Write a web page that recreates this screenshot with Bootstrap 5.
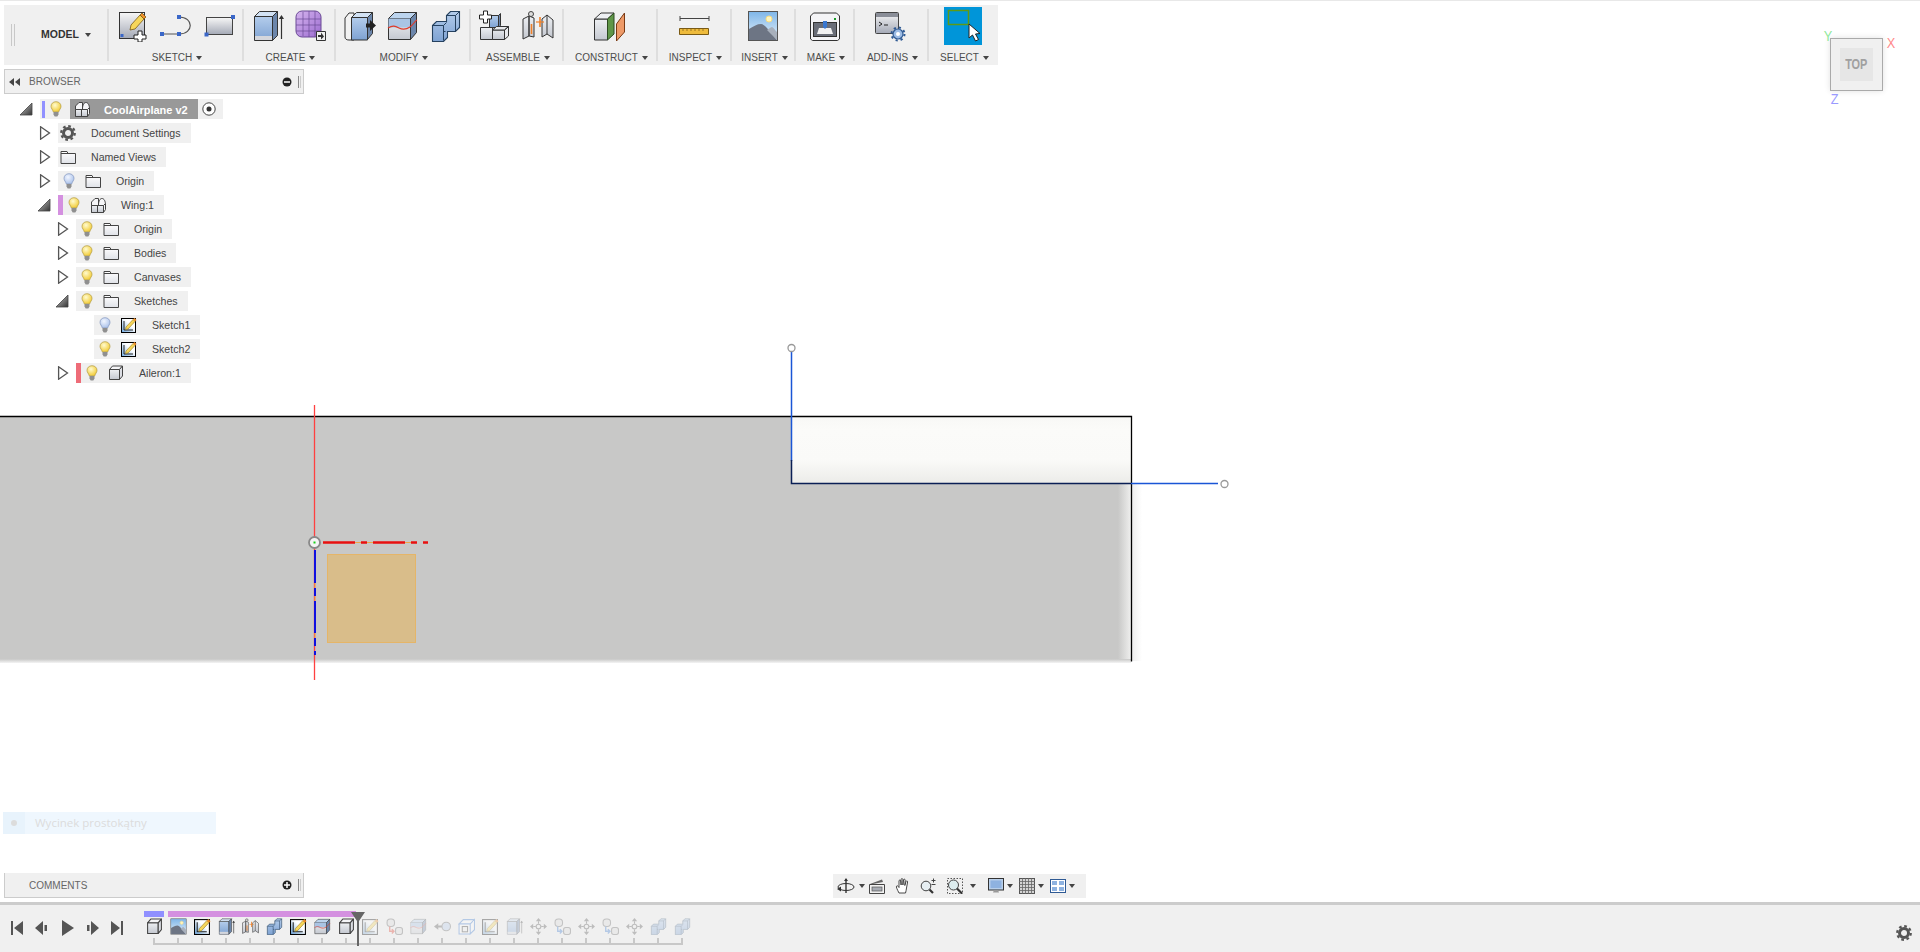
<!DOCTYPE html>
<html lang="en">
<head>
<meta charset="UTF-8">
<meta name="viewport" content="width=device-width, initial-scale=1">
<title>CoolAirplane v2</title>
<link href="https://cdn.jsdelivr.net/npm/bootstrap@5.3.1/dist/css/bootstrap.min.css" rel="stylesheet">
<script src="https://cdn.jsdelivr.net/npm/bootstrap@5.3.1/dist/js/bootstrap.bundle.min.js"></script>
<style>
body { font-family: "Liberation Sans", Arial, sans-serif; background: #fff; color: #444; overflow: hidden; }
.svg-defs { position: absolute; width: 0; height: 0; }
.cad-viewport { background: linear-gradient(#e8e8e8 1px, #fff 1px); }
.scene { position: absolute; left: 0; top: 0; }
.dock { position: absolute; left: 4px; top: 5px; bottom: 4px; width: 994px; }

/* ribbon */
.ribbon { display: grid; grid-template-columns: 104px 135px 92px 135px 93px 94px 74px 64px 59px 74px 70px; height: 60px; background: #f0f0f0; }
.rb-group { position: relative; display: flex; flex-direction: column; align-items: center; height: 60px; }
.rb-group::after { content: ""; position: absolute; right: -1px; top: 4px; bottom: 4px; width: 2px; background: #dedede; }
.rb-group:last-child::after { display: none; }
.rb-icons { display: flex; gap: 11px; height: 32px; margin-top: 5px; }
.rb-label { margin-top: 10px; font-size: 10px; line-height: 12px; color: #4c4c4c; white-space: nowrap; display: flex; align-items: center; gap: 4px; padding-left: 3px; }
.caret-dn { display: inline-block; width: 0; height: 0; border-left: 3px solid transparent; border-right: 3px solid transparent; border-top: 4px solid #444; }
.rb-model { flex-direction: row; align-items: center; }
.model-grip { width: 4px; height: 22px; margin: 0 26px 0 7px; border-left: 1px solid #c8c8c8; border-right: 1px solid #c8c8c8; }
.model-name { font-size: 10.5px; font-weight: 700; color: #333; display: flex; align-items: center; gap: 6px; }
.select-tile { width: 38px; height: 38px; background: #0095d9; margin-top: -3px; display: block; }

/* panels */
.side-panel { width: 300px; height: 25px; margin-top: 4px; background: #f0f0f0; border: 1px solid #ccc; font-size: 10px; color: #666; padding-left: 4px; padding-right: 2px; }
.side-panel .panel-title { margin-left: 6px; }
.panel-lead { width: 14px; }
.panel-pin { width: 3px; height: 12px; margin-left: 6px; border-left: 1px solid #888; border-right: 1px solid #ccc; }
.comments-panel { border-top: 0; margin-top: 0; height: 25px; }

/* tree */
.tree { margin-top: 3px; }
.tree-row { display: flex; align-items: center; height: 24px; }
.lvl-0 { padding-left: 16px; }
.lvl-1 { padding-left: 34px; }
.lvl-2 { padding-left: 52px; }
.lvl-3 { padding-left: 70px; }
.tree-arrow { width: 20px; flex: none; display: flex; }
.tree-arrow svg { display: block; }
.tree-chip { display: flex; align-items: center; height: 20px; background: #f0f0f0; font-size: 10.6px; color: #444; padding-top: 2px; padding-right: 10px; white-space: nowrap; }
.chip-bar { width: 5px; height: 20px; margin-top: -2px; }
.bar-root { background: #9090ff; width: 3px; height: 17px; margin-left: 2px; }
.bar-wing { background: #d490e0; }
.bar-aileron { background: #ee6c78; }
.chip-bulb { width: 12px; height: 16px; margin-left: 5px; margin-right: 10px; margin-top: -2px; flex: none; }
.chip-icon { width: 16px; height: 16px; margin-right: 15px; margin-top: -2px; flex: none; }
.chip-lead { margin-left: 2px; }
.root-label { display: flex; align-items: center; height: 20px; margin-top: -2px; margin-left: -2px; padding: 2px 10px 0 4px; background: #999; color: #fff; font-weight: 700; font-size: 11px; }
.root-label .chip-icon { margin-right: 14px; }
.root-radio { width: 14px; height: 14px; margin-left: 4px; margin-top: -2px; }
.root-chip { padding-right: 7px; }

/* toast */
.cmd-toast { width: 213px; height: 22px; margin-left: -1px; margin-bottom: 39px; background: #eff7fe; color: #dcdcdc; font-family: "Open Sans", sans-serif; font-size: 11.5px; }
.toast-lead { width: 22px; height: 22px; background: #e8f3fc; }
.toast-dot { width: 6px; height: 6px; border-radius: 50%; background: #dcdcdc; }
.toast-text { margin-left: 10px; }

/* nav bar */
.nav-tools { position: absolute; left: 833px; bottom: 4px; width: 253px; height: 24px; padding-left: 3px; background: #f0f0f0; display: grid; grid-template-columns: 33px 26px 25px 27px 41px 31px 31px 33px; }
.nav-cell { display: flex; align-items: center; gap: 3px; }
.nav-cell svg { width: 16px; height: 16px; flex: none; }
.nav-cell .nav-wide { width: 20px; }

/* view cube */
.view-cube { position: absolute; left: 1830px; top: 38px; width: 53px; height: 53px; background: #f0f0f0; border: 1px solid #aaa; box-shadow: 0 0 6px rgba(0,0,0,.12); }
.cube-face { width: 33px; height: 33px; background: #e6e6e6; color: #a0a0a0; font-weight: 700; font-size: 14px; }
.cube-face span { display: block; transform: scaleX(.78); }
.axis-tag { position: absolute; font-size: 15px; line-height: 15px; font-weight: 400; transform: scaleX(.85); }
.axis-y { left: 1823px; top: 28px; color: #8fe89a; }
.axis-x { left: 1886px; top: 35px; color: #ff8a8a; }
.axis-z { left: 1830px; top: 91px; color: #9a9aff; }

/* timeline */
.timeline { height: 50px; flex: none; background: #f0f0f0; border-top: 3px solid #ccc; }
.play-btns { padding-left: 4px; padding-top: 15px; }
.play-btn { width: 25px; display: flex; justify-content: center; }
.tl-strip { position: relative; margin-left: 13px; padding-top: 6px; }
.tl-bars { display: flex; gap: 4px; padding-left: 2px; height: 6px; }
.tl-bar-a { width: 20px; background: #9090ff; }
.tl-bar-b { width: 188px; background: #d490e0; }
.tl-cells { display: flex; height: 19px; }
.tl-cell { width: 24px; display: flex; justify-content: center; align-items: center; }
.tl-cell svg { width: 17px; height: 17px; }
.tl-ghost { opacity: .32; }
.tl-ruler { display: block; margin-top: 1px; }
.tl-marker { position: absolute; left: 209px; top: 7px; }
.tl-gear { margin-left: auto; margin-right: 8px; padding-top: 15px; }
</style>
</head>
<body>
<svg class="svg-defs" xmlns="http://www.w3.org/2000/svg">
  <defs>
    <linearGradient id="gWhite" x1="0" y1="0" x2="0" y2="1"><stop offset="0" stop-color="#fff"/><stop offset="1" stop-color="#b4b8c2"/></linearGradient>
    <linearGradient id="gPanel" x1="0" y1="0" x2="0" y2="1"><stop offset="0" stop-color="#f7f7f7"/><stop offset="1" stop-color="#a4a9b6"/></linearGradient>
    <linearGradient id="gBlue" x1="0" y1="0" x2="0" y2="1"><stop offset="0" stop-color="#b4cdec"/><stop offset="1" stop-color="#7ea2d2"/></linearGradient>
    <linearGradient id="gGrey" x1="0" y1="0" x2="0" y2="1"><stop offset="0" stop-color="#eef0f3"/><stop offset="1" stop-color="#c4c8d0"/></linearGradient>
    <linearGradient id="gPurple" x1="0" y1="0" x2="1" y2="1"><stop offset="0" stop-color="#d5b4ee"/><stop offset="1" stop-color="#9c6cd0"/></linearGradient>
    <linearGradient id="gSky" x1="0" y1="0" x2="0" y2="1"><stop offset="0" stop-color="#7fb6e8"/><stop offset="1" stop-color="#e6f2fb"/></linearGradient>
    <linearGradient id="gFold" x1="0" y1="0" x2="0" y2="1"><stop offset="0" stop-color="#fff"/><stop offset="1" stop-color="#e0e2e8"/></linearGradient>
    <linearGradient id="gArrow" x1="0" y1="0" x2="1" y2="1"><stop offset="0" stop-color="#ccc"/><stop offset="1" stop-color="#333"/></linearGradient>
    <linearGradient id="gSkIn" x1="0" y1="1" x2="1" y2="0"><stop offset="0" stop-color="#6aa6e0"/><stop offset=".6" stop-color="#fff"/></linearGradient>
    <radialGradient id="gBulbOn" cx=".4" cy=".35" r=".7"><stop offset="0" stop-color="#fffbd0"/><stop offset="1" stop-color="#f2c92c"/></radialGradient>
    <radialGradient id="gBulbOff" cx=".4" cy=".35" r=".7"><stop offset="0" stop-color="#f2f6ff"/><stop offset="1" stop-color="#a8c0ea"/></radialGradient>
    <linearGradient id="gFadeR" x1="0" y1="0" x2="1" y2="0"><stop offset="0" stop-color="#c8c8c7"/><stop offset="1" stop-color="#efefee"/></linearGradient>
    <linearGradient id="gFadeB" x1="0" y1="0" x2="0" y2="1"><stop offset="0" stop-color="#c8c8c7"/><stop offset="1" stop-color="#f4f4f4"/></linearGradient>
    <linearGradient id="gLight" x1="0" y1="0" x2="0" y2="1"><stop offset="0" stop-color="#f8f8f6"/><stop offset=".2" stop-color="#fbfbf9"/><stop offset=".65" stop-color="#fafaf8"/><stop offset="1" stop-color="#ecece9"/></linearGradient>
    <linearGradient id="gShade" x1="0" y1="0" x2="1" y2="0"><stop offset="0" stop-color="#eeeeee"/><stop offset="1" stop-color="#fff"/></linearGradient>

    <symbol id="i-sketch-new" viewBox="0 0 32 32">
      <rect x="2.5" y="2.5" width="25" height="26" fill="url(#gPanel)" stroke="#333"/>
      <rect x="3.5" y="24" width="3" height="3" fill="#3a67c8"/>
      <path d="M14 15 23 5l4 4-9 10-5 1z" fill="#f6d65a" stroke="#7a5a14" stroke-width=".8"/>
      <path d="M23 5l2-2 4 4-2 2z" fill="#ef8f2a" stroke="#7a5a14" stroke-width=".8"/>
      <path d="M21 21h4v4h4v4h-4v3h-4v-3h-4v-4h4z" fill="#fff" stroke="#222"/>
    </symbol>
    <symbol id="i-sk-line" viewBox="0 0 32 32">
      <path d="M3 24H19M19 7C34 7 34 24 19 24" fill="none" stroke="#555" stroke-width="1.2"/>
      <path d="M0 22h4v4H0zM17 22h4v4h-4zM17 5h4v4h-4z" fill="#3a67c8"/>
    </symbol>
    <symbol id="i-sk-rect" viewBox="0 0 32 32">
      <rect x="3.5" y="7.5" width="26" height="17" fill="url(#gPanel)" stroke="#444"/>
      <path d="M28 5h4v4h-4zM1.500 22.500h4v4h-4z" fill="#3a67c8"/>
    </symbol>
    <symbol id="i-extrude" viewBox="0 0 32 32">
      <path d="M2.500 6.500h18v24h-18z" fill="url(#gBlue)" stroke="#333"/>
      <path d="M3 26h17v4H3z" fill="#d4d6dc"/>
      <path d="M2.500 6.500l5-5h18l-5 5z" fill="#d2e2f4" stroke="#333"/>
      <path d="M20.500 6.500l5-5v24l-5 5z" fill="#6c86ab" stroke="#333"/>
      <path d="M29.500 7v22" stroke="#333" stroke-width="1.200"/>
      <path d="M26.800 9l2.700-4 2.500 4z" fill="#333"/>
    </symbol>
    <symbol id="i-form" viewBox="0 0 32 32">
      <rect x="1" y="1" width="25" height="26" rx="6" fill="url(#gPurple)" stroke="#6b4a96"/>
      <path d="M1 9h25M1 15h25M1 21h25M8 2v24M14 1v26M20 1v26" stroke="#6b4a96" stroke-width=".7" fill="none"/>
      <path d="M21.500 21.500h9v9h-9z" fill="#f0f0f0" stroke="#333"/>
      <path d="M23 25h3v-2.500l3 4-3 3V27h-3z" fill="#333"/>
    </symbol>
    <symbol id="i-presspull" viewBox="0 0 32 32">
      <path d="M1 8 5 3h5v27H5C2.500 30 1 29 1 27z" fill="#f2f2f2" stroke="#333"/>
      <path d="M7.500 7.500h16v22.500h-16z" fill="url(#gBlue)" stroke="#333"/>
      <path d="M7.500 7.500l5-5h16l-5 5z" fill="#d2e2f4" stroke="#333"/>
      <path d="M23.500 7.500l5-5v21l-5 6z" fill="#6c86ab" stroke="#333"/>
      <path d="M22 13.500h4V10l6 5.500-6 5.500v-3.500h-4z" fill="#222"/>
    </symbol>
    <symbol id="i-fillet" viewBox="0 0 32 32">
      <path d="M1.500 8.500h22v21h-22z" fill="url(#gGrey)" stroke="#333"/>
      <path d="M1.500 8.500l6-6h22l-6 6z" fill="#bcd4ee" stroke="#333"/>
      <path d="M1.500 8.500h22v9h-22z" fill="#a9c4e4" stroke="none"/>
      <path d="M23.500 8.500l6-6v20l-6 7z" fill="#6c86ab" stroke="#333"/>
      <path d="M1 18c5-3 7-2 11 0s8 1 11-1 4-5 7-7" fill="none" stroke="#e03a28" stroke-width="1.200"/>
    </symbol>
    <symbol id="i-combine" viewBox="0 0 32 32">
      <path d="M2.500 15.500l4-4h10v-6l4-4h9v16l-4 4h-8v6l-4 4h-11z" fill="url(#gBlue)" stroke="#25415f" stroke-width="1.100"/>
      <path d="M16.500 5.500h9l4-4M25.500 5.500v16M2.500 15.500h11l3-3M13.500 15.500v15M13.500 21.500h2" fill="none" stroke="#25415f"/>
    </symbol>
    <symbol id="i-assemble" viewBox="0 0 32 32">
      <path d="M10.500 5.500h9v12h-9z" fill="url(#gBlue)" stroke="#333"/>
      <path d="M19.500 5.500l2 -2v12l-2 2z" fill="#6c86ab" stroke="#333"/>
      <path d="M1.500 17.500h12v12h-12zM13.500 20h12v9.500h-12z" fill="url(#gGrey)" stroke="#333"/>
      <path d="M25.500 20l4-3.500v9.500l-4 3.500zM13.500 20l4-3.500h12l-4 3.500z" fill="#e8e9ec" stroke="#333"/>
      <path d="M4.500 1h4v4h4v4h-4v4h-4V9h-4V5h4z" fill="#fff" stroke="#222"/>
    </symbol>
    <symbol id="i-joint" viewBox="0 0 32 32">
      <path d="M1 9 7 6v20l-6 3zM7 6l5 2v19l-5-1z" fill="url(#gGrey)" stroke="#333"/>
      <circle cx="9" cy="4" r="2.500" fill="#ddd" stroke="#444"/>
      <path d="M20 9l5-4 6 5v18l-6-4-5 3z" fill="url(#gGrey)" stroke="#333"/>
      <path d="M25 5v19" stroke="#333"/>
      <path d="M9.500 14v10M18 7v10" stroke="#f08028" stroke-width="1.600"/>
      <path d="M14 12h8" stroke="#f08028" stroke-width="1.200"/>
    </symbol>
    <symbol id="i-construct" viewBox="0 0 32 32">
      <path d="M0.500 9v21h13V9z" fill="url(#gGrey)" stroke="#333"/>
      <path d="M.5 9 7 3h13l-6.500 6z" fill="#eef0f3" stroke="#333"/>
      <path d="M13.500 9 20 3v21l-6.500 6z" fill="#5f9648" stroke="#2c4a20"/>
      <path d="M22.500 14 30.500 3v19l-8 9z" fill="#ee9a68" stroke="#7a3a14"/>
    </symbol>
    <symbol id="i-ruler" viewBox="0 0 32 32">
      <path d="M2 6v5M31 6v5M2 8.500h29" stroke="#444" fill="none"/>
      <path d="M1.500 18.500h29v6h-29z" fill="#eebb3c" stroke="#7a5a14"/>
      <path d="M5 19v2M9 19v2M13 19v2M17 19v2M21 19v2M25 19v2" stroke="#7a5a14" stroke-width=".7"/>
    </symbol>
    <symbol id="i-picture" viewBox="0 0 32 32">
      <rect x="1.500" y="1.500" width="29" height="29" fill="url(#gSky)" stroke="#555"/>
      <circle cx="22" cy="9" r="3" fill="#fff6c0" stroke="#f8dc80"/>
      <path d="M2 30V19c5-3 8-5 12-5s10 9 16 16z" fill="#6d7584"/>
      <path d="M20 20c3-2 4-3 5-3s3 3 5 5v8z" fill="#a8b0bc"/>
    </symbol>
    <symbol id="i-make" viewBox="0 0 32 32">
      <path d="M1.500 6l3-3h23l3 3v23l-2 1.500h-25l-2-1.500z" fill="#f4f4f6" stroke="#333"/>
      <rect x="4.500" y="12.500" width="23" height="14" fill="#6a6e78" stroke="#333"/>
      <path d="M8 24l2-6h12l2 6z" fill="#f2f2f2"/>
      <path d="M14 11h4v6l-2 2-2-2z" fill="#3a78d0"/>
      <rect x="25" y="8" width="2" height="2" fill="#1a9a28"/>
    </symbol>
    <symbol id="i-addins" viewBox="0 0 32 32">
      <rect x=".5" y="2.500" width="23" height="21" rx="1" fill="url(#gPanel)" stroke="#444"/>
      <rect x="1" y="3" width="22" height="4" fill="#8a8e98"/>
      <path d="M4 12l3 2-3 2M9 15h4" fill="none" stroke="#222"/>
      <circle cx="23" cy="24" r="5" fill="#9cbbe4" stroke="#2f5a94" stroke-width="1.200"/>
      <circle cx="23" cy="24" r="6.500" fill="none" stroke="#2f5a94" stroke-width="2" stroke-dasharray="2.200 2.900"/>
      <circle cx="23" cy="24" r="2" fill="#fff"/>
    </symbol>
    <symbol id="i-select" viewBox="0 0 38 38">
      <rect x="4.500" y="3.500" width="20" height="14" fill="none" stroke="#5e9a16" stroke-width="1.500"/>
      <path d="M25 17v14l3.500-3 3 6 3-1.500-3-5.500 4.500-.5z" fill="#fff" stroke="#222"/>
    </symbol>

    <symbol id="i-bulb" viewBox="0 0 12 16">
      <path d="M6 .7C2.900.7 1 2.900 1 5.300c0 2.200 1.700 3.200 2.200 5.500h5.600C9.300 8.500 11 7.500 11 5.300 11 2.900 9.100.7 6 .7z" fill="url(#gBulbOn)" stroke="#b09a40" stroke-width=".7"/>
      <path d="M3.500 11h5v2.500l-1.200 2H4.700l-1.200-2z" fill="#8f8f8f"/>
    </symbol>
    <symbol id="i-bulb-off" viewBox="0 0 12 16">
      <path d="M6 .7C2.900.7 1 2.900 1 5.300c0 2.200 1.700 3.200 2.200 5.500h5.600C9.300 8.500 11 7.500 11 5.300 11 2.900 9.100.7 6 .7z" fill="url(#gBulbOff)" stroke="#7f94bd" stroke-width=".7"/>
      <path d="M3.500 11h5v2.500l-1.200 2H4.700l-1.200-2z" fill="#8f8f8f"/>
    </symbol>
    <symbol id="i-folder" viewBox="0 0 16 16">
      <path d="M1 2.500h6l1 2h7.500v10H1z" fill="url(#gFold)" stroke="#444"/>
      <path d="M1 4.500h7" stroke="#444"/>
    </symbol>
    <symbol id="i-gear" viewBox="0 0 16 16">
      <circle cx="8" cy="8" r="4.500" fill="none" stroke="#555" stroke-width="3"/>
      <circle cx="8" cy="8" r="6.800" fill="none" stroke="#555" stroke-width="2.200" stroke-dasharray="2.700 2.640"/>
    </symbol>
    <symbol id="i-comp" viewBox="0 0 16 16">
      <path d="M1.500 15.500V5L5 1.500h3.500V8c0-4 1.500-6.500 3.500-6.500S15.500 4 15.500 8v4.500l-2 3z" fill="#f6f6f8" stroke="#444" stroke-linejoin="round"/>
      <path d="M1.500 8.500h12v7h-12z" fill="url(#gGrey)" stroke="#444"/>
      <path d="M7.500 8.500v7M13.500 8.500l2-2" fill="none" stroke="#444"/>
    </symbol>
    <symbol id="i-box" viewBox="0 0 16 16">
      <path d="M1.500 4.500h10v10h-10z" fill="url(#gGrey)" stroke="#444" stroke-linejoin="round"/>
      <path d="M1.500 4.500l3-3.500h10l-3 3.500z" fill="#f5f5f7" stroke="#444" stroke-linejoin="round"/>
      <path d="M11.500 4.500l3-3.500v10l-3 3.500z" fill="#dcdee4" stroke="#444" stroke-linejoin="round"/>
    </symbol>
    <symbol id="i-sketch" viewBox="0 0 16 16">
      <rect x=".5" y="1.500" width="14" height="14" fill="url(#gSkIn)" stroke="#000"/>
      <path d="M3 4v9h9" fill="none" stroke="#222"/>
      <path d="M5 10l7-7.500 2 2-7 7.500-2.500.5z" fill="#f6d65a" stroke="#9a7a1a" stroke-width=".6"/>
      <path d="M12 2.500l1.500-1.500 2 2-1.500 1.500z" fill="#ef8f2a"/>
    </symbol>
    <symbol id="i-move" viewBox="0 0 16 16">
      <path d="M8 0l2.500 3h-5zM8 16l2.500-3h-5zM0 8l3-2.500v5zM16 8l-3-2.500v5z" fill="#555"/>
      <circle cx="8" cy="8" r="2.200" fill="none" stroke="#555"/>
      <path d="M8 3v2.500M8 10.500V13M3 8h2.500M10.500 8H13" stroke="#555"/>
    </symbol>
    <symbol id="i-rjoint" viewBox="0 0 16 16">
      <rect x="1" y="1" width="7" height="7" rx="3" fill="#ddd" stroke="#666"/>
      <rect x="9" y="9" width="6.500" height="6.500" rx="2" fill="#ddd" stroke="#666"/>
      <path d="M3.500 8v4.500H7M5.500 10.500 7.500 12.500 5.500 14.500" fill="none" stroke="#e03a28" stroke-width="1.300"/>
    </symbol>
    <symbol id="i-bjoint" viewBox="0 0 16 16">
      <rect x="1" y="1" width="7" height="7" rx="3" fill="#ddd" stroke="#666"/>
      <rect x="9" y="9" width="6.500" height="6.500" rx="2" fill="#ddd" stroke="#666"/>
      <path d="M3.500 8v4.500H7M5.500 10.500 7.500 12.500 5.500 14.500" fill="none" stroke="#3a78d0" stroke-width="1.300"/>
    </symbol>
    <symbol id="i-ball" viewBox="0 0 16 16">
      <path d="M0 8l4-3v2h4v2H4v2z" fill="#555"/>
      <circle cx="11.500" cy="8" r="4" fill="#b8cdea" stroke="#666"/>
    </symbol>
    <symbol id="i-shell" viewBox="0 0 16 16">
      <path d="M1 5.500h10.500V15H1zM1 5.500 5 1.500h10.500L11.500 5.500zM11.500 5.500l4-4V11l-4 4z" fill="#fff" stroke="#3a78d0"/>
      <rect x="4" y="8" width="5" height="5" fill="#f0f0f0" stroke="#333"/>
    </symbol>

    <symbol id="i-orbit" viewBox="0 0 20 16">
      <path d="M10 1v14" stroke="#333" stroke-width="1.400"/>
      <path d="M8 3l2-3 2 3z" fill="#333"/>
      <ellipse cx="10" cy="9" rx="8" ry="3.500" fill="none" stroke="#333"/>
      <path d="M1 11l4-2.500v5z" fill="#333"/>
    </symbol>
    <symbol id="i-look" viewBox="0 0 16 16">
      <path d="M.5 6.500h15v9H.5z" fill="#f2f2f2" stroke="#444"/>
      <rect x="3" y="9" width="10" height="4" fill="#a8acb4" stroke="#555" stroke-width=".7"/>
      <path d="M1 6 13 1.500 14 4 4 6z" fill="#666"/>
    </symbol>
    <symbol id="i-hand" viewBox="0 0 16 16">
      <path d="M4 15C2 11 1 9 1.500 8.200 2.200 7.300 3.200 8 4 9.500V3c0-1.300 1.500-1.300 1.700 0l.4 4V1.500C6.100.3 7.800.3 7.900 1.500V7l.6-5c.2-1.200 1.800-1 1.700.2L9.800 7.500l1.200-4c.4-1.100 1.800-.7 1.600.5L11.500 10c-.3 2-.5 3.500-1 5z" fill="#fff" stroke="#333" stroke-width=".9"/>
    </symbol>
    <symbol id="i-zoom" viewBox="0 0 16 16">
      <circle cx="6" cy="8" r="4.800" fill="#e6eef2" stroke="#444"/>
      <path d="M9.500 11.500l3.500 3.500" stroke="#333" stroke-width="2.200"/>
      <path d="M11.500 2.500h4M13.500.5v4M11.500 6.500h4" stroke="#444" fill="none"/>
    </symbol>
    <symbol id="i-zoomfit" viewBox="0 0 16 16">
      <rect x=".5" y=".5" width="15" height="15" fill="none" stroke="#555" stroke-dasharray="1.500 1.500"/>
      <circle cx="6.500" cy="7" r="5" fill="#dcecee" stroke="#444"/>
      <path d="M10 10.500l5 5" stroke="#333" stroke-width="2.200"/>
    </symbol>
    <symbol id="i-display" viewBox="0 0 16 16">
      <rect x=".5" y=".5" width="15" height="11.500" fill="#b8cfea" stroke="#333"/>
      <rect x="2.500" y="2.500" width="11" height="7.500" fill="#8eb2e0"/>
      <path d="M6 12h4l1 2.500H5z" fill="#999"/>
    </symbol>
    <symbol id="i-grid" viewBox="0 0 16 16">
      <rect x=".5" y=".5" width="15" height="15" fill="#d4d4d4" stroke="#555"/>
      <path d="M3.500 0v16M6.500 0v16M9.500 0v16M12.500 0v16M0 3.500h16M0 6.500h16M0 9.500h16M0 12.500h16" stroke="#666" stroke-width=".8"/>
    </symbol>
    <symbol id="i-views" viewBox="0 0 16 16">
      <rect x=".5" y="1.500" width="15" height="13" fill="#fff" stroke="#2f5a94"/>
      <path d="M2 3h5v4H2zM9 3h5v4H9zM2 9h5v4H2zM9 9h5v4H9z" fill="#8eb2e0"/>
    </symbol>
    <symbol id="a-closed" viewBox="0 0 14 14"><path d="M2.600 .8 11.500 7 2.600 13.200z" fill="#fff" stroke="#555" stroke-width="1.300"/></symbol>
    <symbol id="a-open" viewBox="0 0 14 14"><path d="M0 13 12 1v12z" fill="url(#gArrow)" stroke="#444" stroke-width=".8"/></symbol>
  </defs>
</svg>

<div class="d-flex flex-column vh-100 overflow-hidden">
  <main class="cad-viewport position-relative flex-grow-1">

    <svg class="scene" width="1920" height="899" viewBox="0 0 1920 899" xmlns="http://www.w3.org/2000/svg">
      <rect x="0" y="417" width="1118" height="243" fill="#c8c8c7"/>
      <rect x="1118" y="417" width="13" height="243" fill="url(#gFadeR)"/>
      <rect x="0" y="659" width="1131" height="4" fill="url(#gFadeB)"/>
      <rect x="1132" y="484" width="10" height="177" fill="url(#gShade)"/>
      <rect x="791" y="417" width="340" height="66" fill="url(#gLight)"/>
      <path d="M0 416.500H1131.500V661.500" fill="none" stroke="#000" stroke-width="1.300"/>

      <path d="M791.500 352V461M1131 483.500H1218" stroke="#1a56d6" stroke-width="1.500" fill="none"/>
      <path d="M791.500 460V483.500H1131" stroke="#0a1f55" stroke-width="1.500" fill="none"/>
      <circle cx="791.500" cy="348" r="3.500" fill="#fff" stroke="#999" stroke-width="1.300"/>
      <circle cx="1224.500" cy="484" r="3.500" fill="#fff" stroke="#999" stroke-width="1.300"/>

      <rect x="327.500" y="554.500" width="88" height="88" fill="#d9bd8a" stroke="#e5b568"/>
      <path d="M314.500 405V680" stroke="#ff4040" stroke-width="1.300"/>
      <path d="M327 542.500H416M315 550V645" stroke="#eda848" fill="none"/>
      <path d="M323 542.500h32M361 542.500h6M373 542.500h32M411 542.500h6M423 542.500h5" stroke="#e81010" stroke-width="2.500" fill="none"/>
      <path d="M315 550v33M315 588v8M315 601v32M315 638v8M315 651v4" stroke="#1010e0" stroke-width="2" fill="none"/>
      <circle cx="314.500" cy="542.500" r="5.500" fill="#f4f4f4" stroke="#888" stroke-width="1.800"/>
      <rect x="313.500" y="541.500" width="2" height="2" fill="#18d018"/>
    </svg>

    <div class="dock d-flex flex-column">
      <div class="ribbon">
        <div class="rb-group rb-model">
          <span class="model-grip"></span>
          <span class="model-name">MODEL <i class="caret-dn"></i></span>
        </div>
        <div class="rb-group">
          <div class="rb-icons">
            <svg width="32" height="32"><use href="#i-sketch-new"/></svg>
            <svg width="32" height="32"><use href="#i-sk-line"/></svg>
            <svg width="32" height="32"><use href="#i-sk-rect"/></svg>
          </div>
          <div class="rb-label">SKETCH <i class="caret-dn"></i></div>
        </div>
        <div class="rb-group">
          <div class="rb-icons">
            <svg width="32" height="32"><use href="#i-extrude"/></svg>
            <svg width="32" height="32"><use href="#i-form"/></svg>
          </div>
          <div class="rb-label">CREATE <i class="caret-dn"></i></div>
        </div>
        <div class="rb-group">
          <div class="rb-icons">
            <svg width="32" height="32"><use href="#i-presspull"/></svg>
            <svg width="32" height="32"><use href="#i-fillet"/></svg>
            <svg width="32" height="32"><use href="#i-combine"/></svg>
          </div>
          <div class="rb-label">MODIFY <i class="caret-dn"></i></div>
        </div>
        <div class="rb-group">
          <div class="rb-icons">
            <svg width="32" height="32"><use href="#i-assemble"/></svg>
            <svg width="32" height="32"><use href="#i-joint"/></svg>
          </div>
          <div class="rb-label">ASSEMBLE <i class="caret-dn"></i></div>
        </div>
        <div class="rb-group">
          <div class="rb-icons"><svg width="32" height="32"><use href="#i-construct"/></svg></div>
          <div class="rb-label">CONSTRUCT <i class="caret-dn"></i></div>
        </div>
        <div class="rb-group">
          <div class="rb-icons"><svg width="32" height="32"><use href="#i-ruler"/></svg></div>
          <div class="rb-label">INSPECT <i class="caret-dn"></i></div>
        </div>
        <div class="rb-group">
          <div class="rb-icons"><svg width="32" height="32"><use href="#i-picture"/></svg></div>
          <div class="rb-label">INSERT <i class="caret-dn"></i></div>
        </div>
        <div class="rb-group">
          <div class="rb-icons"><svg width="32" height="32"><use href="#i-make"/></svg></div>
          <div class="rb-label">MAKE <i class="caret-dn"></i></div>
        </div>
        <div class="rb-group">
          <div class="rb-icons"><svg width="32" height="32"><use href="#i-addins"/></svg></div>
          <div class="rb-label">ADD-INS <i class="caret-dn"></i></div>
        </div>
        <div class="rb-group">
          <div class="rb-icons"><svg class="select-tile"><use href="#i-select"/></svg></div>
          <div class="rb-label">SELECT <i class="caret-dn"></i></div>
        </div>
      </div>

      <div class="side-panel d-flex align-items-center">
        <svg class="panel-lead" width="14" height="8" viewBox="0 0 14 8"><path d="M5 0v8L0 4zM11 0v8L6 4z" fill="#444"/></svg>
        <span class="panel-title">BROWSER</span>
        <svg class="ms-auto" width="10" height="10" viewBox="0 0 10 10"><circle cx="5" cy="5" r="4.500" fill="#222"/><path d="M2 5h6" stroke="#fff" stroke-width="1.500"/></svg>
        <span class="panel-pin"></span>
      </div>

      <div class="tree">
        <div class="tree-row lvl-0">
          <span class="tree-arrow"><svg width="14" height="14"><use href="#a-open"/></svg></span>
          <div class="tree-chip root-chip">
            <span class="chip-bar bar-root"></span>
            <svg class="chip-bulb"><use href="#i-bulb"/></svg>
            <span class="root-label"><svg class="chip-icon"><use href="#i-comp"/></svg>CoolAirplane v2</span>
            <svg class="root-radio" viewBox="0 0 14 14"><circle cx="7" cy="7" r="6.200" fill="#fff" stroke="#444"/><circle cx="7" cy="7" r="2.500" fill="#333"/></svg>
          </div>
        </div>
        <div class="tree-row lvl-1">
          <span class="tree-arrow"><svg width="14" height="14"><use href="#a-closed"/></svg></span>
          <div class="tree-chip"><svg class="chip-icon chip-lead"><use href="#i-gear"/></svg>Document Settings</div>
        </div>
        <div class="tree-row lvl-1">
          <span class="tree-arrow"><svg width="14" height="14"><use href="#a-closed"/></svg></span>
          <div class="tree-chip"><svg class="chip-icon chip-lead"><use href="#i-folder"/></svg>Named Views</div>
        </div>
        <div class="tree-row lvl-1">
          <span class="tree-arrow"><svg width="14" height="14"><use href="#a-closed"/></svg></span>
          <div class="tree-chip"><svg class="chip-bulb"><use href="#i-bulb-off"/></svg><svg class="chip-icon"><use href="#i-folder"/></svg>Origin</div>
        </div>
        <div class="tree-row lvl-1">
          <span class="tree-arrow"><svg width="14" height="14"><use href="#a-open"/></svg></span>
          <div class="tree-chip"><span class="chip-bar bar-wing"></span><svg class="chip-bulb"><use href="#i-bulb"/></svg><svg class="chip-icon"><use href="#i-comp"/></svg>Wing:1</div>
        </div>
        <div class="tree-row lvl-2">
          <span class="tree-arrow"><svg width="14" height="14"><use href="#a-closed"/></svg></span>
          <div class="tree-chip"><svg class="chip-bulb"><use href="#i-bulb"/></svg><svg class="chip-icon"><use href="#i-folder"/></svg>Origin</div>
        </div>
        <div class="tree-row lvl-2">
          <span class="tree-arrow"><svg width="14" height="14"><use href="#a-closed"/></svg></span>
          <div class="tree-chip"><svg class="chip-bulb"><use href="#i-bulb"/></svg><svg class="chip-icon"><use href="#i-folder"/></svg>Bodies</div>
        </div>
        <div class="tree-row lvl-2">
          <span class="tree-arrow"><svg width="14" height="14"><use href="#a-closed"/></svg></span>
          <div class="tree-chip"><svg class="chip-bulb"><use href="#i-bulb"/></svg><svg class="chip-icon"><use href="#i-folder"/></svg>Canvases</div>
        </div>
        <div class="tree-row lvl-2">
          <span class="tree-arrow"><svg width="14" height="14"><use href="#a-open"/></svg></span>
          <div class="tree-chip"><svg class="chip-bulb"><use href="#i-bulb"/></svg><svg class="chip-icon"><use href="#i-folder"/></svg>Sketches</div>
        </div>
        <div class="tree-row lvl-3">
          <span class="tree-arrow"></span>
          <div class="tree-chip"><svg class="chip-bulb"><use href="#i-bulb-off"/></svg><svg class="chip-icon"><use href="#i-sketch"/></svg>Sketch1</div>
        </div>
        <div class="tree-row lvl-3">
          <span class="tree-arrow"></span>
          <div class="tree-chip"><svg class="chip-bulb"><use href="#i-bulb"/></svg><svg class="chip-icon"><use href="#i-sketch"/></svg>Sketch2</div>
        </div>
        <div class="tree-row lvl-2">
          <span class="tree-arrow"><svg width="14" height="14"><use href="#a-closed"/></svg></span>
          <div class="tree-chip"><span class="chip-bar bar-aileron"></span><svg class="chip-bulb"><use href="#i-bulb"/></svg><svg class="chip-icon"><use href="#i-box"/></svg>Aileron:1</div>
        </div>
      </div>

      <div class="cmd-toast d-flex align-items-center mt-auto">
        <span class="toast-lead d-flex align-items-center justify-content-center"><i class="toast-dot"></i></span>
        <span class="toast-text">Wycinek prostokątny</span>
      </div>

      <div class="side-panel comments-panel d-flex align-items-center">
        <span class="panel-lead"></span>
        <span class="panel-title">COMMENTS</span>
        <svg class="ms-auto" width="10" height="10" viewBox="0 0 10 10"><circle cx="5" cy="5" r="4.500" fill="#222"/><path d="M2 5h6M5 2v6" stroke="#fff" stroke-width="1.500"/></svg>
        <span class="panel-pin"></span>
      </div>
    </div>

    <div class="nav-tools">
      <div class="nav-cell"><svg class="nav-wide"><use href="#i-orbit"/></svg><i class="caret-dn"></i></div>
      <div class="nav-cell"><svg><use href="#i-look"/></svg></div>
      <div class="nav-cell"><svg><use href="#i-hand"/></svg></div>
      <div class="nav-cell"><svg><use href="#i-zoom"/></svg></div>
      <div class="nav-cell"><svg><use href="#i-zoomfit"/></svg><i class="caret-dn ms-1"></i></div>
      <div class="nav-cell"><svg><use href="#i-display"/></svg><i class="caret-dn"></i></div>
      <div class="nav-cell"><svg><use href="#i-grid"/></svg><i class="caret-dn"></i></div>
      <div class="nav-cell"><svg><use href="#i-views"/></svg><i class="caret-dn"></i></div>
    </div>

    <div class="view-cube d-flex align-items-center justify-content-center">
      <div class="cube-face d-flex align-items-center justify-content-center"><span>TOP</span></div>
    </div>
    <span class="axis-tag axis-y">Y</span>
    <span class="axis-tag axis-x">X</span>
    <span class="axis-tag axis-z">Z</span>
  </main>

  <footer class="timeline d-flex">
    <div class="play-btns d-flex">
      <span class="play-btn"><svg width="16" height="16" viewBox="0 0 16 16"><path d="M2 1h2v14H2zM14 1v14L5 8z" fill="#555"/></svg></span>
      <span class="play-btn"><svg width="16" height="16" viewBox="0 0 16 16"><path d="M9 1v14L1 8zM10.500 5H13v6h-2.500z" fill="#555"/></svg></span>
      <span class="play-btn"><svg width="16" height="16" viewBox="0 0 16 16"><path d="M3 0l12 8-12 8z" fill="#555"/></svg></span>
      <span class="play-btn"><svg width="16" height="16" viewBox="0 0 16 16"><path d="M7 1v14l8-7zM5.500 5H3v6h2.500z" fill="#555"/></svg></span>
      <span class="play-btn"><svg width="16" height="16" viewBox="0 0 16 16"><path d="M12 1h2v14h-2zM2 1v14l9-7z" fill="#555"/></svg></span>
    </div>
    <div class="tl-strip">
      <div class="tl-bars"><span class="tl-bar-a"></span><span class="tl-bar-b"></span></div>
      <div class="tl-cells">
        <span class="tl-cell"><svg><use href="#i-box"/></svg></span>
        <span class="tl-cell"><svg><use href="#i-picture"/></svg></span>
        <span class="tl-cell"><svg><use href="#i-sketch"/></svg></span>
        <span class="tl-cell"><svg><use href="#i-extrude"/></svg></span>
        <span class="tl-cell"><svg><use href="#i-joint"/></svg></span>
        <span class="tl-cell"><svg><use href="#i-combine"/></svg></span>
        <span class="tl-cell"><svg><use href="#i-sketch"/></svg></span>
        <span class="tl-cell"><svg><use href="#i-fillet"/></svg></span>
        <span class="tl-cell"><svg><use href="#i-box"/></svg></span>
        <span class="tl-cell tl-ghost"><svg><use href="#i-sketch"/></svg></span>
        <span class="tl-cell tl-ghost"><svg><use href="#i-rjoint"/></svg></span>
        <span class="tl-cell tl-ghost"><svg><use href="#i-fillet"/></svg></span>
        <span class="tl-cell tl-ghost"><svg><use href="#i-ball"/></svg></span>
        <span class="tl-cell tl-ghost"><svg><use href="#i-shell"/></svg></span>
        <span class="tl-cell tl-ghost"><svg><use href="#i-sketch"/></svg></span>
        <span class="tl-cell tl-ghost"><svg><use href="#i-extrude"/></svg></span>
        <span class="tl-cell tl-ghost"><svg><use href="#i-move"/></svg></span>
        <span class="tl-cell tl-ghost"><svg><use href="#i-bjoint"/></svg></span>
        <span class="tl-cell tl-ghost"><svg><use href="#i-move"/></svg></span>
        <span class="tl-cell tl-ghost"><svg><use href="#i-bjoint"/></svg></span>
        <span class="tl-cell tl-ghost"><svg><use href="#i-move"/></svg></span>
        <span class="tl-cell tl-ghost"><svg><use href="#i-combine"/></svg></span>
        <span class="tl-cell tl-ghost"><svg><use href="#i-combine"/></svg></span>
      </div>
      <svg class="tl-ruler" width="552" height="8" viewBox="0 0 552 8"><path d="M12 1v6M36 1v6M60 1v6M84 1v6M108 1v6M132 1v6M156 1v6M180 1v6M204 1v6M228 1v6M252 1v6M276 1v6M300 1v6M324 1v6M348 1v6M372 1v6M396 1v6M420 1v6M444 1v6M468 1v6M492 1v6M516 1v6M540 1v6M11 7h530" stroke="#c8c8c8" stroke-width="2" fill="none"/></svg>
      <svg class="tl-marker" width="14" height="34" viewBox="0 0 14 34"><path d="M0 0h14l-6 9v25H6V9z" fill="#666"/></svg>
    </div>
    <div class="tl-gear"><svg width="16" height="16"><use href="#i-gear"/></svg></div>
  </footer>
</div>
</body>
</html>
